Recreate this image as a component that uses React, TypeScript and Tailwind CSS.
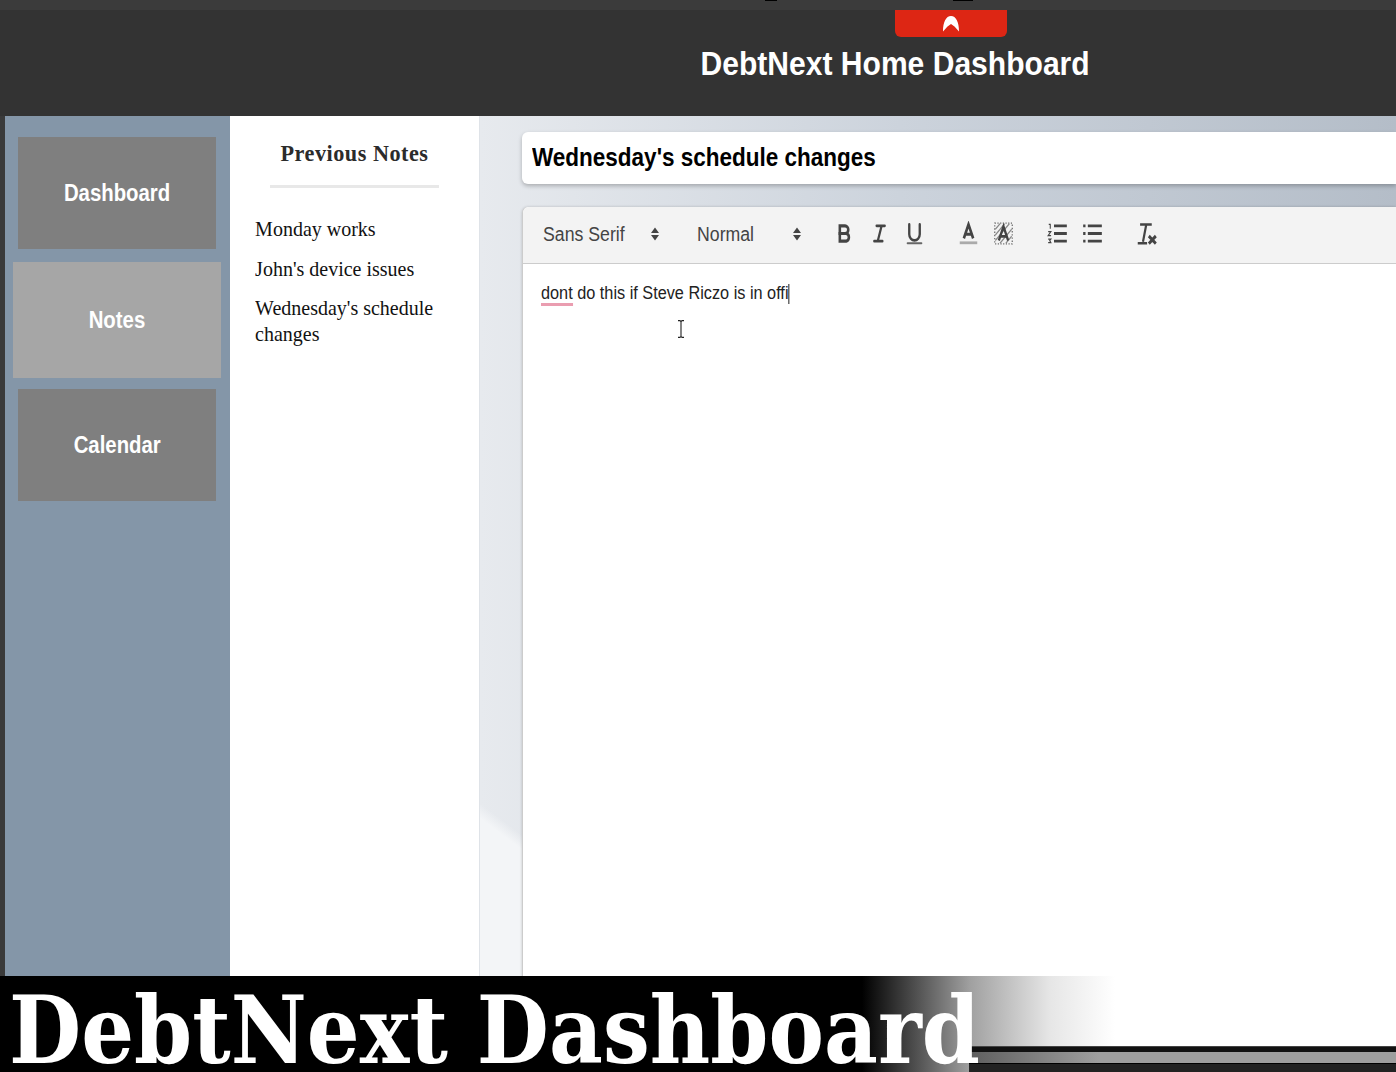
const sans = { fontFamily: '"Liberation Sans", Arial, sans-serif' }

// quill style toolbar icons, squeezed a bit like the video frame
const iconClass = 'w-[21px] h-[25px] shrink-0'

const BoldIcon = () => (
  <svg viewBox="0 0 18 18" preserveAspectRatio="none" className={iconClass} fill="none" stroke="#444" strokeWidth="2.2">
    <path d="M5 3.500h4.500a2.700 2.700 0 0 1 0 5.500H5z" />
    <path d="M5 9h5.500a2.800 2.800 0 0 1 0 5.500H5z" />
  </svg>
)
const ItalicIcon = () => (
  <svg viewBox="0 0 18 18" preserveAspectRatio="none" className={iconClass} fill="none" stroke="#444" strokeWidth="1.9" strokeLinecap="round">
    <path d="M6.500 3.500h7M4.500 14.500h7M10.800 3.500L7.500 14.500" />
  </svg>
)
const UnderlineIcon = () => (
  <svg viewBox="0 0 18 18" preserveAspectRatio="none" className={iconClass} fill="none" stroke="#444" strokeWidth="2" strokeLinecap="round">
    <path d="M4.500 2.500v7a4.500 4.500 0 0 0 9 0v-7" />
    <path d="M3 16h12" stroke="#666" strokeWidth="1.400" />
  </svg>
)
const ColorIcon = () => (
  <svg viewBox="0 0 18 18" preserveAspectRatio="none" className={iconClass} fill="none" stroke="#444" strokeWidth="2.200">
    <path d="M5 12.500L9 2.500l4 10M6.300 9.500h5.400" />
    <path d="M1.500 15.700h15" stroke="#aaa" strokeWidth="2" />
  </svg>
)
const BackgroundIcon = () => (
  <svg viewBox="0 0 18 18" preserveAspectRatio="none" className={iconClass} fill="none" stroke="#444" strokeWidth="2">
    <path d="M1.500 1.500h15v15h-15z" strokeDasharray="1 1.300" strokeWidth="1" stroke="#666" />
    <path d="M2 6l4-4M2 10l8-8M2 14l12-12M6 16l10-10M11 16l5-5" strokeWidth="1" stroke="#888" />
    <path d="M5 14L9 4l4 10M6.300 11h5.400" />
  </svg>
)
const OrderedIcon = () => (
  <svg viewBox="0 0 18 18" preserveAspectRatio="none" className={iconClass} fill="none" stroke="#444" strokeWidth="2">
    <path d="M6 3.500h11M6 9h11M6 14.500h11" />
    <path d="M1.500 2.500h1.300v3M1 7.700h2.300L1 10.500h2.500M1 13h2.300l-1 1 1 1.600H1" strokeWidth="0.9" />
  </svg>
)
const BulletIcon = () => (
  <svg viewBox="0 0 18 18" preserveAspectRatio="none" className={iconClass} fill="none" stroke="#444" strokeWidth="2">
    <path d="M5 3.500h12M5 9h12M5 14.500h12M1 3.500h2M1 9h2M1 14.500h2" />
  </svg>
)
const ClearIcon = () => (
  <svg viewBox="0 0 18 18" preserveAspectRatio="none" className={iconClass} fill="none" stroke="#444" strokeWidth="1.900">
    <path d="M3.500 2.500h10M8.800 2.500L6 15M1.500 16h8" />
    <path d="M11 10.800l6 5.500M17 10.800l-6 5.500" strokeWidth="2.400" />
  </svg>
)

const PickerArrows = () => (
  <svg viewBox="0 0 8 14" className="w-[8px] h-[14px]" fill="#444">
    <path d="M0 6L4 0.500L8 6ZM0 8L4 13.500L8 8Z" />
  </svg>
)

const Picker = ({ label, width }: { label: string; width: string }) => (
  <div className={`flex items-center justify-between text-[20px] leading-[24px] text-[#444] ${width}`}>
    <span className="origin-left scale-x-[0.885] whitespace-nowrap">{label}</span>
    <PickerArrows />
  </div>
)

const NavItem = ({ label, active }: { label: string; active?: boolean }) => (
  <div
    className={
      active
        ? 'h-[116px] ml-[8px] mr-[9px] bg-[#a6a6a6] flex items-center justify-center text-white font-bold text-[23px]'
        : 'h-[112px] ml-[13px] mr-[14px] bg-[#7f7f7f] flex items-center justify-center text-white font-bold text-[23px]'
    }
  >
    <span className="scale-x-[0.885]">{label}</span>
  </div>
)

export default function App() {
  return (
    <div className="w-[1396px] h-[1072px] overflow-hidden flex flex-col bg-white" style={sans}>
      {/* top bar */}
      <header className="relative h-[116px] shrink-0 bg-[#333333] flex flex-col items-center pl-[394px]">
        <div className="absolute left-0 right-0 top-0 h-[10px] bg-[#3b3b3b]" />
        <div className="absolute left-[765px] top-0 w-[12px] h-[1px] bg-black" />
        <div className="absolute left-[953px] top-0 w-[20px] h-[1px] bg-black" />
        <div className="relative w-[112px] h-[27px] mt-[10px] bg-[#dd2614] rounded-b-[6px] ml-[112px] flex items-center justify-center shrink-0">
          <svg viewBox="0 0 18 17" className="w-[18px] h-[17px]">
            <path d="M1 16.500C1 7 4 1 9 1s8 6 8 15.500L12.500 11.500 9 9 5.500 11.500z" fill="#fff" />
          </svg>
        </div>
        <h1 className="text-[34px] leading-[40px] mt-[6px] font-bold text-white scale-x-[0.884] whitespace-nowrap">DebtNext Home Dashboard</h1>
      </header>

      <div className="flex-1 min-h-0 flex">
        <div className="w-[5px] bg-[#3a3a3a]" />
        {/* nav */}
        <nav className="w-[225px] bg-[#8496a8] pt-[21px] flex flex-col">
          <NavItem label="Dashboard" />
          <div className="h-[13px]" />
          <NavItem label="Notes" active />
          <div className="h-[11px]" />
          <NavItem label="Calendar" />
        </nav>

        {/* notes list */}
        <aside className="w-[250px] bg-white border-r border-[#dfe3e8]" style={{ fontFamily: '"Liberation Serif", "Times New Roman", serif' }}>
          <h2 className="text-[24px] leading-[28px] mt-[23px] text-center font-bold text-[#2b2b2b] tracking-[0.55px] scale-x-[0.925]">Previous Notes</h2>
          <div className="h-[3px] w-[169px] bg-[#e8e8e8] mt-[18px] ml-[40px]" />
          <ul className="mt-[28px] pl-[27px] pr-[10px] text-[21.500px] leading-[26px] text-[#111] origin-left scale-x-[0.93]">
            <li>Monday works</li>
            <li className="mt-[14px]">John's device issues</li>
            <li className="mt-[13px] w-[200px]">Wednesday's schedule changes</li>
          </ul>
        </aside>

        {/* editor */}
        <main className="flex-1 min-w-0 pl-[42px] pt-[16px] bg-[linear-gradient(217deg,transparent_1100px,#f3f5f7_1112px),linear-gradient(90deg,#e7eaee_0,#ccd3dc_420px,#b4bdc8_917px)]">
          <div className="h-[52px] bg-white rounded-l-[6px] shadow-[0_2px_4px_rgba(0,0,0,0.25)] flex items-center pl-[10px] text-[25px] font-bold text-black">
            <span className="origin-left scale-x-[0.9] whitespace-nowrap -mt-[1px]">Wednesday's schedule changes</span>
          </div>
          <div className="mt-[23px] h-[800px] bg-white rounded-tl-[6px] border-l border-[#ccc] shadow-[0_0_3px_rgba(0,0,0,0.2)]">
            <div className="h-[57px] bg-[#f3f3f3] rounded-tl-[6px] border-b border-[#ccc] flex items-center pl-[20px] pb-[3px]">
              <Picker label="Sans Serif" width="w-[116px]" />
              <div className="w-[38px]" />
              <Picker label="Normal" width="w-[104px]" />
              <div className="flex items-center gap-[14px] ml-[33px]">
                <BoldIcon />
                <ItalicIcon />
                <UnderlineIcon />
              </div>
              <div className="flex items-center gap-[14px] ml-[33px]">
                <ColorIcon />
                <BackgroundIcon />
              </div>
              <div className="flex items-center gap-[14px] ml-[33px]">
                <OrderedIcon />
                <BulletIcon />
              </div>
              <div className="ml-[33px]">
                <ClearIcon />
              </div>
            </div>
            <div className="relative pl-[18px] pt-[18px] text-[18.300px] leading-[22px] text-[#222]">
              <div className="origin-left scale-x-[0.89] whitespace-nowrap">
                <span className="border-b-[3px] border-[#ea9db0]">dont</span> do this if Steve Riczo is in offi
                <span className="inline-block w-[1px] h-[20px] bg-black align-middle" />
              </div>
              <svg viewBox="0 0 8 18" className="absolute left-[154px] top-[56px] w-[8px] h-[18px]" fill="none" stroke="#222" strokeWidth="1.100">
                <path d="M1 0.600h2l1 1 1-1h2M4 1.600v14.800M1 17.400h2l1-1 1 1h2" />
              </svg>
            </div>
          </div>
        </main>
      </div>

      {/* video caption */}
      <footer className="relative h-[96px] shrink-0 bg-[linear-gradient(90deg,#000_0,#000_862px,#a0a0a0_970px,#e6e6e6_1050px,#fff_1115px)] overflow-hidden">
        <div className="absolute left-[969px] right-0 top-[70px] h-[26px] flex flex-col">
          <div className="h-[6px] bg-[#111] border-t border-[#444]" />
          <div className="h-[11px] bg-[linear-gradient(90deg,#5e5e5e_0,#9e9e9e_130px)]" />
          <div className="h-[9px] bg-[#222] border-t border-[#000]" />
        </div>
        <div className="relative pl-[10px] pt-[15px] text-[93px] leading-[80px] text-white font-bold whitespace-nowrap origin-left scale-x-[0.895]" style={{ fontFamily: '"DejaVu Serif", serif' }}>
          DebtNext Dashboard
        </div>
      </footer>
    </div>
  )
}
